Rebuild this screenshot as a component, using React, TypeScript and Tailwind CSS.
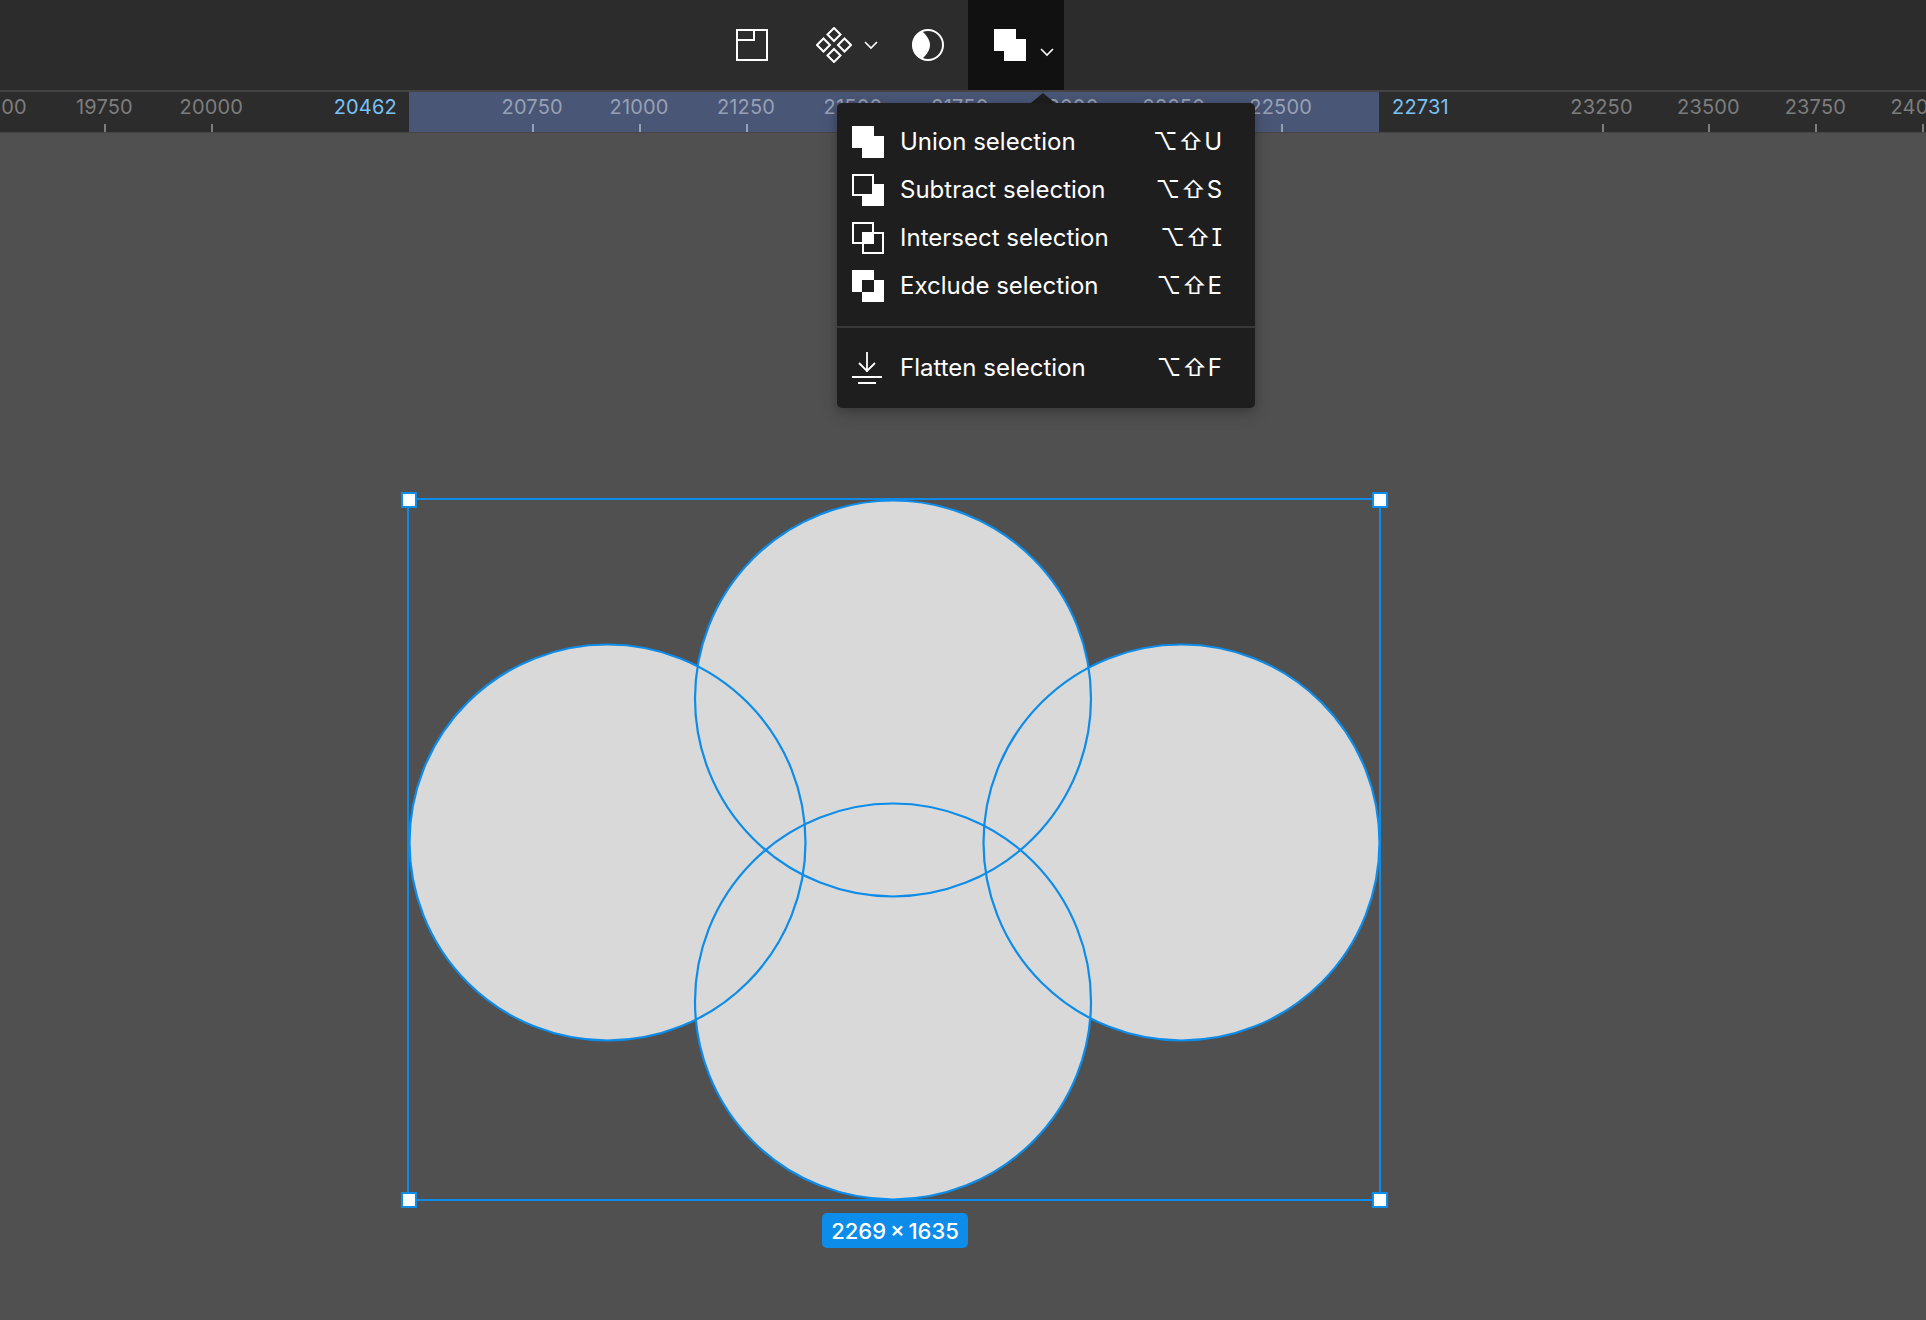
import type { ReactNode } from "react";

const BLUE = "#0d8ce9";

function Chevron() {
  return (
    <svg width="14" height="9" viewBox="0 0 14 9" fill="none" stroke="white" strokeWidth="1.6">
      <path d="M1 1l6 6 6-6" />
    </svg>
  );
}

function Icon({ children }: { children: ReactNode }) {
  return (
    <svg width="32" height="32" viewBox="0 0 32 32" fill="none" className="shrink-0">
      {children}
    </svg>
  );
}

const UNION = "M0 0h22v10h10v22H10V22H0z";

const MENU = [
  {
    label: "Union selection",
    key: "U",
    icon: <path d={UNION} fill="white" />,
  },
  {
    label: "Subtract selection",
    key: "S",
    icon: (
      <>
        <path d="M22 10h10v22H10V22h12z" fill="white" />
        <rect x="1" y="1" width="20" height="20" stroke="white" strokeWidth="2" />
      </>
    ),
  },
  {
    label: "Intersect selection",
    key: "I",
    icon: (
      <>
        <rect x="10" y="10" width="12" height="12" fill="white" />
        <rect x="1" y="1" width="20" height="20" stroke="white" strokeWidth="2" />
        <rect x="11" y="11" width="20" height="20" stroke="white" strokeWidth="2" />
      </>
    ),
  },
  {
    label: "Exclude selection",
    key: "E",
    icon: (
      <>
        <path d={UNION} fill="white" />
        <rect x="10" y="10" width="12" height="12" fill="#1e1e1e" />
      </>
    ),
  },
];

const TICKS: { label: string; band?: boolean }[] = [
  { label: "19500" },
  { label: "19750" },
  { label: "20000" },
  { label: "" },
  { label: "" },
  { label: "20750", band: true },
  { label: "21000", band: true },
  { label: "21250", band: true },
  { label: "21500", band: true },
  { label: "21750", band: true },
  { label: "22000", band: true },
  { label: "22250", band: true },
  { label: "22500", band: true },
  { label: "" },
  { label: "" },
  { label: "23250" },
  { label: "23500" },
  { label: "23750" },
  { label: "24000" },
];

const CIRCLES = [
  { cx: 607.5, cy: 709.5 },
  { cx: 893, cy: 565.5 },
  { cx: 1181.5, cy: 709.5 },
  { cx: 893, cy: 868.5 },
];

function MenuRow({ icon, label, hotkey }: { icon: ReactNode; label: string; hotkey: string }) {
  return (
    <div className="flex h-12 items-center gap-4 pl-[15px] pr-[32px]">
      <Icon>{icon}</Icon>
      <span className="flex-1 text-[24px] leading-none">{label}</span>
      <span className="text-[24px] leading-none tracking-[0.04em] [font-feature-settings:'cv08','ss02']">⌥⇧{hotkey}</span>
    </div>
  );
}

export default function App() {
  return (
    <div className="relative flex h-[1320px] w-[1926px] flex-col overflow-hidden bg-[#505050] font-['Inter',sans-serif] text-white">
      <div className="flex h-[92px] shrink-0 items-center border-b-2 border-[#444444] bg-[#2c2c2c] pl-[736px]">
        <Icon>
          <path d="M1 1h30v30H1zM1 11h17V1" stroke="white" strokeWidth="2" />
        </Icon>
        <div className="ml-[48px] flex items-center gap-[12px]">
          <svg width="36" height="36" viewBox="0 0 36 36" fill="none" stroke="white" strokeWidth="2">
            <path d="M18 1l6.500 6.500L18 14l-6.500-6.500zM18 22l6.500 6.500L18 35l-6.500-6.500zM7.500 11.500L14 18l-6.500 6.500L1 18zM28.500 11.500L35 18l-6.500 6.500L22 18z" />
          </svg>
          <Chevron />
        </div>
        <div className="ml-[34px]">
          <Icon>
            <circle cx="16" cy="16" r="15" stroke="white" strokeWidth="2" />
            <path d="M10 2A15 15 0 0 0 10 30C15 25 18 21 18 16S15 7 10 2z" fill="white" />
          </Icon>
        </div>
        <div className="ml-[24px] flex h-full w-[96px] items-center bg-[#111111] pl-[26px]">
          <Icon>
            <path d={UNION} fill="white" />
          </Icon>
          <div className="ml-[14px] mt-[14px] flex">
            <Chevron />
          </div>
        </div>
      </div>

      <div className="relative h-[41px] shrink-0 border-b border-[#444444] bg-[#2c2c2c]">
        <div className="absolute bottom-0 left-[409px] top-0 w-[970px] bg-[#4a5676]" />
        <div className="relative ml-[-55px] flex h-full">
          {TICKS.map((t, i) => (
            <div key={i} className="flex w-[106.95px] shrink-0 flex-col items-center">
              <span className={`mr-[2px] mt-[3px] h-[24px] text-[20px] leading-[24px] tracking-[0.01em] ${t.band ? "text-[#97a0b4]" : "text-[#7d7d7d]"}`}>
                {t.label}
              </span>
              {t.label && <span className={`mt-[5px] h-[8px] w-[2px] ${t.band ? "bg-[#97a0b4]" : "bg-[#7d7d7d]"}`} />}
            </div>
          ))}
        </div>
        <span className="absolute right-[1529px] top-[3px] text-[20px] leading-[24px] tracking-[0.01em] text-[#79c2f7]">20462</span>
        <span className="absolute left-[1392px] top-[3px] text-[20px] leading-[24px] tracking-[0.01em] text-[#79c2f7]">22731</span>
      </div>

      <div className="relative flex-1">
        <svg className="absolute left-0 top-0" width="1926" height="1187" viewBox="0 0 1926 1187" fill="none">
          {CIRCLES.map((c) => (
            <circle key={c.cx + "-" + c.cy} cx={c.cx} cy={c.cy} r="198" fill="#d9d9d9" />
          ))}
          {CIRCLES.map((c) => (
            <circle key={c.cx + "_" + c.cy} cx={c.cx} cy={c.cy} r="198" stroke={BLUE} strokeWidth="2.2" />
          ))}
        </svg>
        <div className="absolute left-[407px] top-[365px] h-[703px] w-[974px] border-2 border-[#0d8ce9]">
          <span className="absolute -left-[8px] -top-[8px] h-4 w-4 border-2 border-[#0d8ce9] bg-white" />
          <span className="absolute -right-[9px] -top-[8px] h-4 w-4 border-2 border-[#0d8ce9] bg-white" />
          <span className="absolute -left-[8px] -bottom-[9px] h-4 w-4 border-2 border-[#0d8ce9] bg-white" />
          <span className="absolute -right-[9px] -bottom-[9px] h-4 w-4 border-2 border-[#0d8ce9] bg-white" />
        </div>
        <div className="absolute left-[822px] top-[1080px] flex h-[35px] w-[146px] items-center justify-center rounded-[5px] bg-[#0d8ce9] pt-[1px] text-[22px] font-medium [word-spacing:-2px]">
          2269 × 1635
        </div>
      </div>

      <div className="absolute left-[1031px] top-[93px] h-0 w-0 border-x-[12px] border-b-[10px] border-x-transparent border-b-[#1e1e1e]" />
      <div className="absolute left-[837px] top-[103px] w-[418px] rounded-[5px] bg-[#1e1e1e] pb-4 pt-[15px] shadow-[0_5px_17px_rgba(0,0,0,0.2),0_2px_7px_rgba(0,0,0,0.15)]">
        {MENU.map((m) => (
          <MenuRow key={m.key} icon={m.icon} label={m.label} hotkey={m.key} />
        ))}
        <div className="my-[16px] h-[2px] bg-[#383838]" />
        <MenuRow
          label="Flatten selection"
          hotkey="F"
          icon={<path d="M0 25h30M6 31h18M15 0v20M7 11l8 8 8-8" stroke="white" strokeWidth="1.8" />}
        />
      </div>
    </div>
  );
}
